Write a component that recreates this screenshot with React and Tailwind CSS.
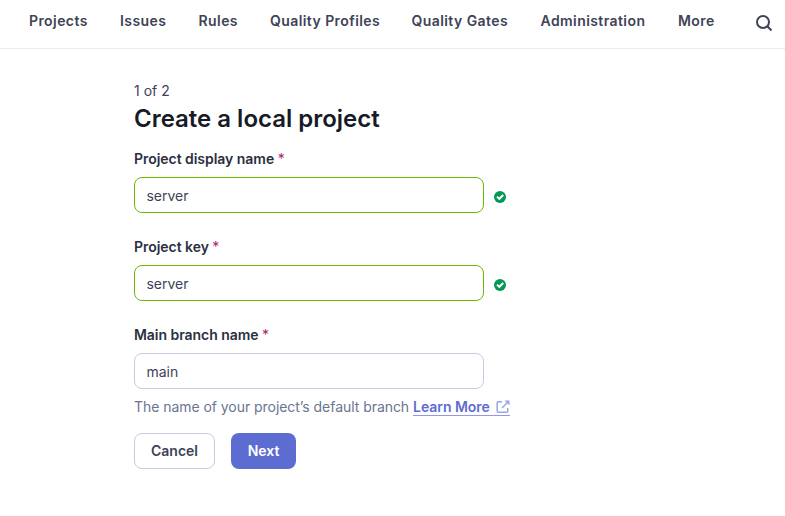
const nav = [
  ['Projects', 'w-[91px]'],
  ['Issues', 'w-[78.5px]'],
  ['Rules', 'w-[71.5px]'],
  ['Quality Profiles', 'w-[141.5px]'],
  ['Quality Gates', 'w-[129px]'],
  ['Administration', 'w-[137.5px]'],
  ['More', 'w-[77px]'],
];

function Check() {
  return (
    <svg width="12" height="12" viewBox="0 0 12 12" className="relative top-0.5 ml-2.5 shrink-0">
      <circle cx="6" cy="6" r="6" fill="#039855" />
      <path d="M3 5.6 5.3 7.9 9.2 4" fill="none" stroke="#fff" strokeWidth="2" />
    </svg>
  );
}

function Field({ label, value, valid }) {
  return (
    <div>
      <label className="block h-5 text-sm leading-5 font-semibold tracking-[-0.04px] text-[#2a2f40]">
        {label} <span className="font-normal text-[#b4236a]">*</span>
      </label>
      <div className="mt-2 flex items-center">
        <input
          defaultValue={value}
          className={`h-9 w-[350px] rounded-lg border pr-3 pl-[11.5px] text-sm tracking-[-0.03px] text-[#3e4357] outline-none ${valid ? 'border-[#6cb900]' : 'border-[#c5cddf]'}`}
        />
        {valid && <Check />}
      </div>
    </div>
  );
}

export default function App() {
  return (
    <div className="h-[516px] w-[785px] overflow-hidden bg-white font-['Inter',sans-serif] text-[#3e4357]">
      <header className="flex h-[49px] border-b border-[#ebebeb] pl-[29px]">
        <nav className="flex pt-[11px] text-sm leading-5 font-semibold tracking-[0.42px]">
          {nav.map(([name, width]) => (
            <a key={name} className={`${width} shrink-0 whitespace-nowrap`}>{name}</a>
          ))}
        </nav>
        <svg width="18" height="18" viewBox="0 0 18 18" fill="none" stroke="#3e4357" strokeWidth="2" className="mt-[14px]">
          <circle cx="8" cy="8" r="6" />
          <path d="m12.3 12.3 4.2 4.2" />
        </svg>
      </header>
      <main className="pt-8 pl-[134px]">
        <p className="text-sm leading-5">1 of 2</p>
        <h1 className="mt-0.5 text-2xl leading-8 font-semibold tracking-[-0.01px] text-[#181a28]">Create a local project</h1>
        <form className="mt-[14px] flex flex-col gap-6">
          <Field label="Project display name" value="server" valid />
          <Field label="Project key" value="server" valid />
          <Field label="Main branch name" value="main" />
        </form>
        <p className="mt-2 flex text-sm leading-5 tracking-[-0.05px] text-[#6a7590]">
          The name of your project’s default branch
          <a className="ml-1 flex h-[19px] border-b border-[#9098e8] font-semibold text-[#5d6cd0]">
            Learn More
            <svg width="14" height="14" viewBox="0 0 14 14" fill="none" stroke="#9ba3eb" strokeWidth="1.5" className="mt-[3px] ml-1.5">
              <path d="M6 1.7H2.2q-1 0-1 1v8.5q0 1 1 1h8.5q1 0 1-1V8" />
              <path d="M11.5 2.5 6 8" />
              <path d="M8.5.5h5v5z" fill="#9ba3eb" stroke="none" />
            </svg>
          </a>
        </p>
        <div className="mt-4 flex gap-4 text-sm font-semibold">
          <button type="button" className="h-9 w-[81px] rounded-lg border border-[#c5cddf]">Cancel</button>
          <button type="button" className="h-9 w-[65px] rounded-lg bg-[#5d6cd0] text-white">Next</button>
        </div>
      </main>
    </div>
  );
}
